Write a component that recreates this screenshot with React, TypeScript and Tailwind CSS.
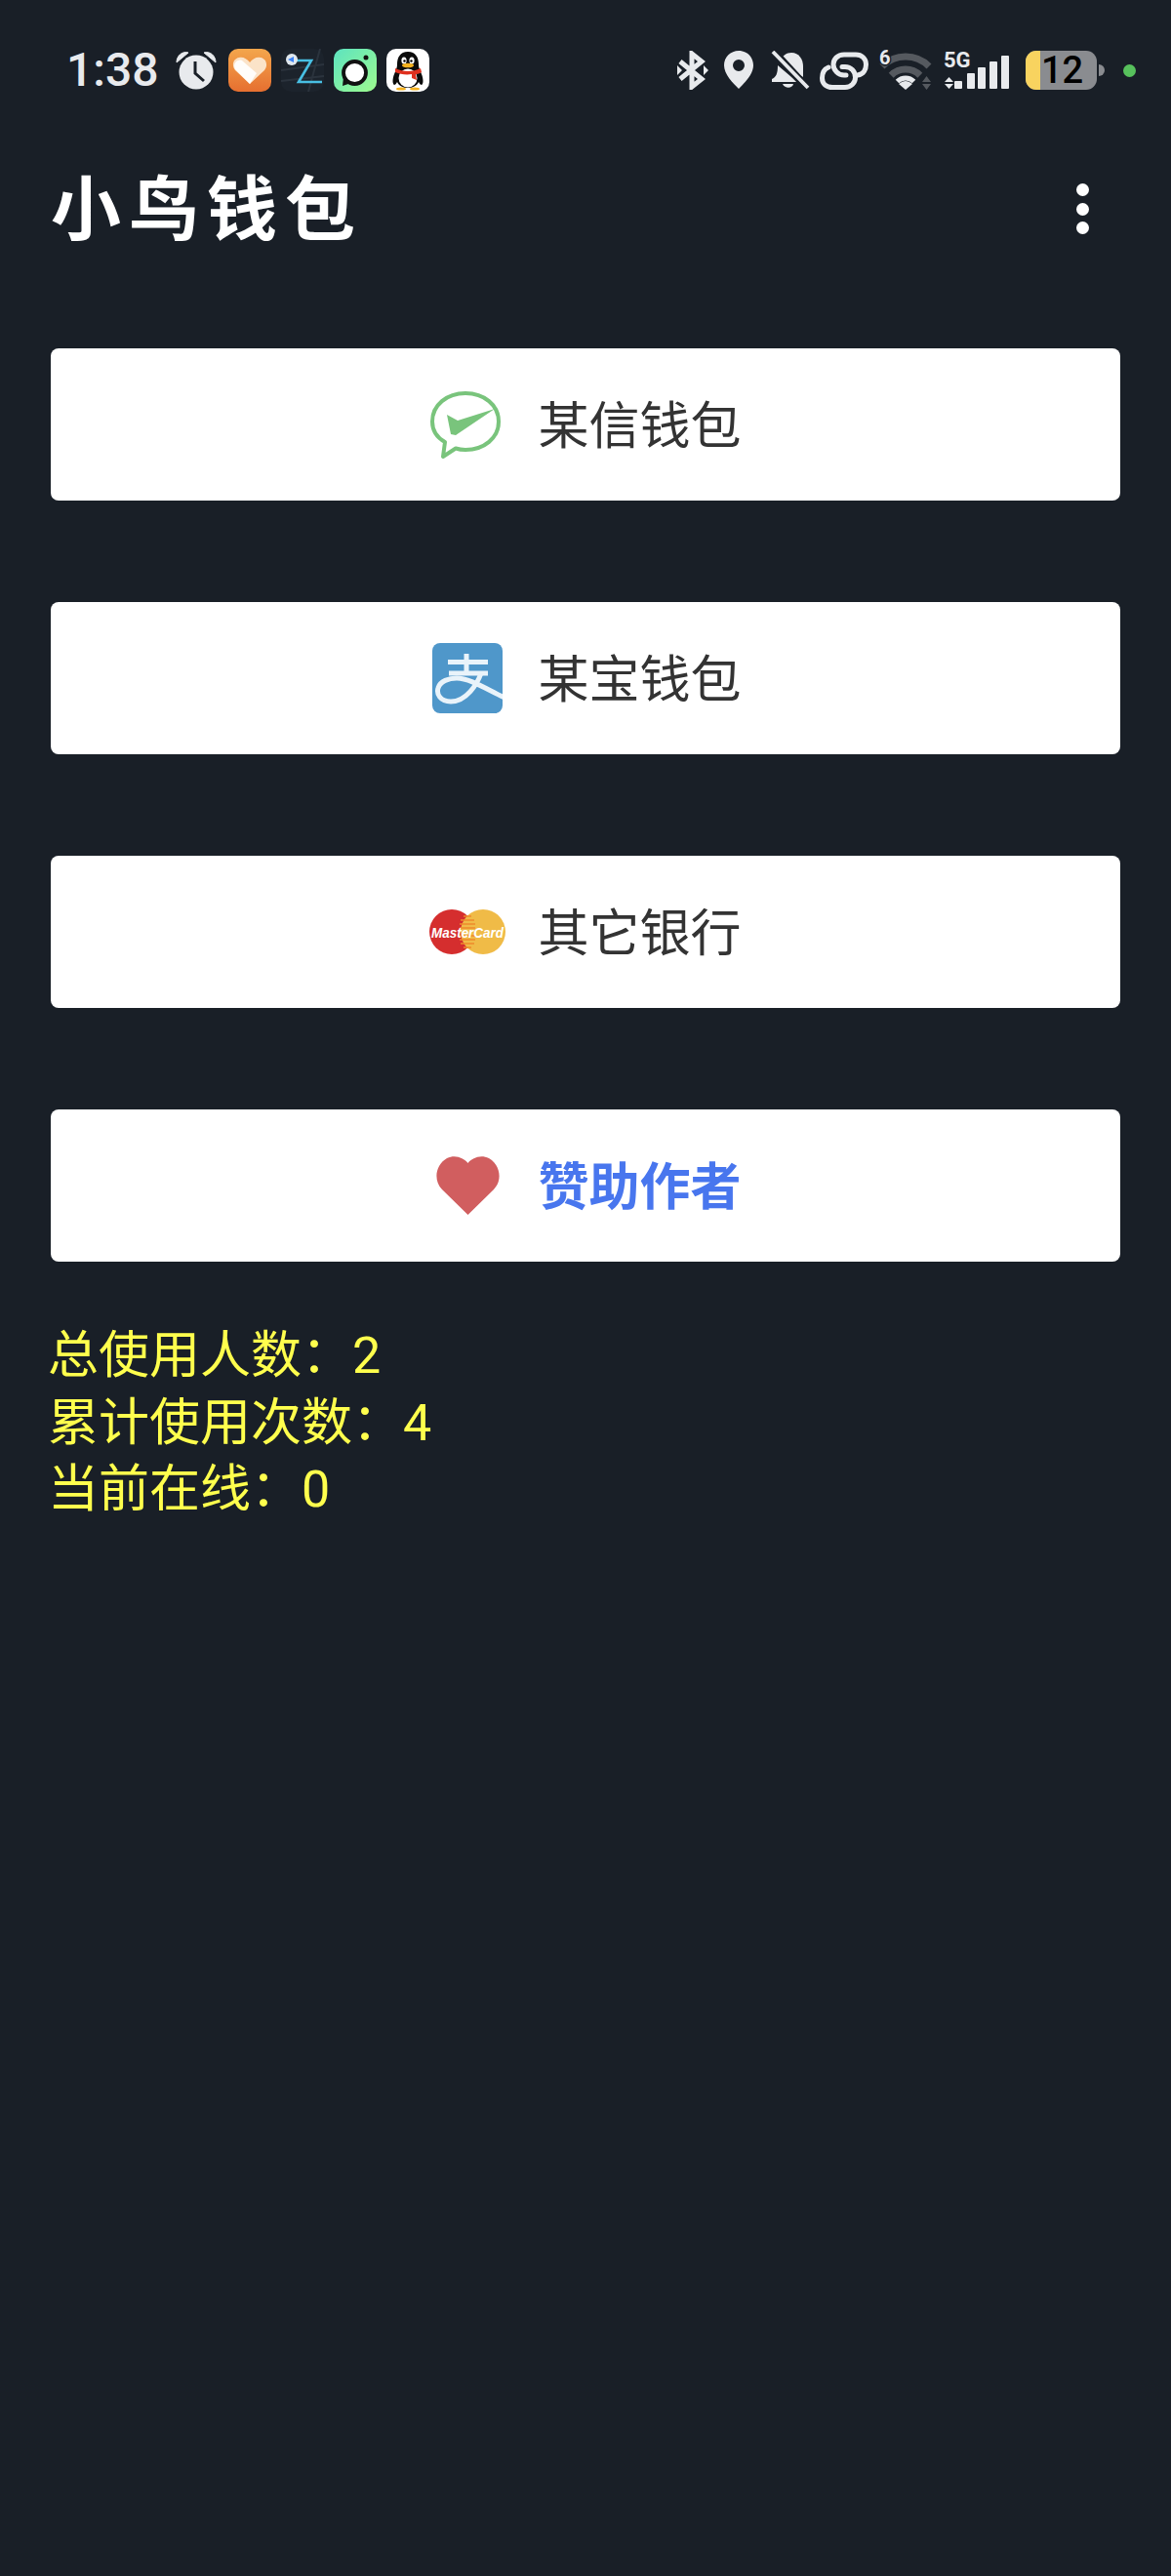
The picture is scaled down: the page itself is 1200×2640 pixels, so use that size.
import React from 'react';

const cjk = { fontFamily: '"Noto Sans CJK SC", sans-serif' };

const AlarmIcon = () => (
  <svg width="42" height="40" viewBox="0 0 42 40">
    <path d="M1 12 C1 5 7 0 13 2 Z M41 12 C41 5 35 0 29 2 Z" fill="#e8eaed" stroke="#e8eaed" strokeWidth="1" />
    <circle cx="21" cy="22" r="17.5" fill="#e8eaed" />
    <path d="M20 11 V23 L29 31" fill="none" stroke="#191f27" strokeWidth="3" />
  </svg>
);

const HealthIcon = () => (
  <svg width="44" height="44" viewBox="0 0 44 44">
    <defs>
      <linearGradient id="healthBg" x1="0" y1="0" x2="0" y2="1">
        <stop offset="0" stopColor="#f3a64c" />
        <stop offset="1" stopColor="#e66f30" />
      </linearGradient>
    </defs>
    <rect width="44" height="44" rx="10" fill="url(#healthBg)" />
    <path d="M22 36 L7 22 C3 17 5 10 11 9 C15 8 19 10 22 14 C25 10 29 8 33 9 C39 10 41 17 37 22 Z" fill="#fbe3c8" />
    <path d="M7 21 C4 16 9 10 14 12 L29 25 L22 36 Z" fill="#fff" opacity="0.9" />
  </svg>
);

const ZIcon = () => (
  <svg width="44" height="44" viewBox="0 0 44 44">
    <rect width="44" height="44" rx="10" fill="#1c232c" />
    <path d="M0 22 L44 16 M0 33 L44 28 M40 0 L28 44" stroke="#2b333d" strokeWidth="2" />
    <path d="M13 12 H31 L18 34 H42" fill="none" stroke="#48bfe3" strokeWidth="2.6" />
    <circle cx="11" cy="11" r="6" fill="#dfe7ee" />
    <path d="M7 11 L13 8 V14 Z" fill="#3b82f6" />
  </svg>
);

const ChatIcon = () => (
  <svg width="44" height="44" viewBox="0 0 44 44">
    <defs>
      <linearGradient id="chatBg" x1="0" y1="0" x2="1" y2="1">
        <stop offset="0" stopColor="#5de3c0" />
        <stop offset="1" stopColor="#9dfb8e" />
      </linearGradient>
    </defs>
    <rect width="44" height="44" rx="10" fill="url(#chatBg)" />
    <circle cx="21.500" cy="24.500" r="11.500" fill="#fff" stroke="#111" strokeWidth="3.800" />
    <path d="M10 29 L9 38 L18 35 Z" fill="#111" />
    <circle cx="33" cy="9" r="2.500" fill="#111" />
  </svg>
);

const QQIcon = () => (
  <svg width="44" height="44" viewBox="0 0 44 44">
    <rect width="44" height="44" rx="10" fill="#fff" />
    <path d="M22 3 C14 3 11 9 11 16 C11 19 10 21 8 26 C6 31 6 36 8 37 C9 37 10 36 11 34 C13 38 17 40 22 40 C27 40 31 38 33 34 C34 36 35 37 36 37 C38 36 38 31 36 26 C34 21 33 19 33 16 C33 9 30 3 22 3 Z" fill="#0b0b0b" />
    <ellipse cx="22" cy="30" rx="9.500" ry="9.500" fill="#fff" />
    <ellipse cx="18" cy="12" rx="2.600" ry="3.600" fill="#fff" />
    <ellipse cx="26" cy="12" rx="2.600" ry="3.600" fill="#fff" />
    <circle cx="18.500" cy="12.500" r="1.200" fill="#000" />
    <circle cx="25.500" cy="12.500" r="1.200" fill="#000" />
    <ellipse cx="22" cy="17" rx="6" ry="2.300" fill="#f5b21f" />
    <path d="M9 20 C17 24 27 24 35 20 L36 24 C33 26 31 26 30 26 L31 32 L26 30 L26 26 C20 27 14 26 9 24 Z" fill="#e0301e" />
    <ellipse cx="15" cy="41" rx="5" ry="1.600" fill="#f5b21f" />
    <ellipse cx="29" cy="41" rx="5" ry="1.600" fill="#f5b21f" />
  </svg>
);

const BluetoothIcon = () => (
  <svg width="32" height="40" viewBox="0 0 32 40">
    <path d="M3 11 L25 29 L15 37 V3 L25 11 L3 29" fill="none" stroke="#e8eaed" strokeWidth="5" strokeLinejoin="miter" />
    <path d="M27 15 L32 20 L27 25 Z M0 15 L5 20 L0 25 Z" fill="#e8eaed" />
  </svg>
);

const PinIcon = () => (
  <svg width="30" height="40" viewBox="0 0 30 40">
    <path fillRule="evenodd" d="M15 0 C6.700 0 0 6.400 0 15 C0 24 9 33 15 39 C21 33 30 24 30 15 C30 6.400 23.300 0 15 0 Z M15 9 A6 6 0 1 1 15 21 A6 6 0 1 1 15 9 Z" fill="#e8eaed" />
  </svg>
);

const BellOffIcon = () => (
  <svg width="40" height="40" viewBox="0 0 40 40">
    <path d="M9 12 C11 5 16 2 21 2 C29 2 33 9 33 16 V27 Z" fill="#e8eaed" />
    <path d="M7 15 L27 32 H1 V29 C5 27 7 24 7 15 Z" fill="#e8eaed" />
    <path d="M12 34 H23 C22 39 14 39 12 34 Z" fill="#e8eaed" />
    <path d="M3 1 L37 38" stroke="#191f27" strokeWidth="8" />
    <path d="M2 1 L38 38" stroke="#e8eaed" strokeWidth="3.800" />
  </svg>
);

const LinkIcon = () => (
  <svg width="52" height="42" viewBox="0 0 52 42">
    <g fill="none" stroke="#e8eaed" strokeWidth="5" strokeLinecap="round">
      <path d="M39 26 C45 25 47.500 20 47.500 15 C47.500 9 43 5 37 5 H25 C18 5 14 10 14 15 C14 21 19 26 25 26 H27" />
      <path d="M9 18 C4 20 2.500 25 2.500 29 C2.500 35 7 38.500 13 38.500 H26 C32 38.500 36.500 34 36.500 28.500 C36.500 22 32 17.500 26 17.500 H23" />
    </g>
  </svg>
);

const WifiIcon = () => (
  <svg width="56" height="42" viewBox="0 0 56 42" className="overflow-visible">
    <path d="M3 17 A34 34 0 0 1 51 17" fill="none" stroke="#55595f" strokeWidth="7" />
    <path d="M12.200 26.200 A21 21 0 0 1 41.800 26.200" fill="none" stroke="#55595f" strokeWidth="7" />
    <path d="M18.500 32.500 A12 12 0 0 1 35.500 32.500" fill="none" stroke="#e8eaed" strokeWidth="5" />
    <path d="M27 41 L20 35 Q27 29 34 35 Z" fill="#e8eaed" />
    <path d="M44 33 L48.500 27 L53 33 Z M44 35 L53 35 L48.500 41 Z" fill="#55595f" />
    <text x="0" y="15" fontFamily="Roboto, sans-serif" fontWeight="700" fontSize="20" fill="#e8eaed" stroke="#191f27" strokeWidth="3" paintOrder="stroke">6</text>
  </svg>
);

const SignalIcon = () => (
  <svg width="68" height="42" viewBox="0 0 68 42" className="overflow-visible">
    <text x="0" y="18" fontFamily="Roboto, sans-serif" fontWeight="700" fontSize="22" fill="#e8eaed">5G</text>
    <path d="M1 33 L5.500 28 L10 33 Z M1 35 L10 35 L5.500 40 Z" fill="#e8eaed" />
    <rect x="11" y="32" width="8" height="8" rx="1" fill="#e8eaed" />
    <rect x="24" y="24" width="8" height="16" rx="1" fill="#e8eaed" />
    <rect x="35" y="18" width="8" height="22" rx="1" fill="#e8eaed" />
    <rect x="47" y="12" width="8" height="28" rx="1" fill="#e8eaed" />
    <rect x="59" y="6" width="8" height="34" rx="1" fill="#e8eaed" />
  </svg>
);

const Battery = () => (
  <div className="flex items-center">
    <div className="relative flex items-center justify-center w-[73px] h-[40px] rounded-[11px] bg-[#8a8c90] pl-[2px]">
      <div className="absolute left-0 top-0 bottom-0 w-[15px] rounded-l-[11px] bg-[#f8d35f]" />
      <span className="relative text-[38px] font-medium text-black leading-none font-['Roboto']">12</span>
    </div>
    <div className="ml-[2px] w-[6px] h-[12px] rounded-r-full bg-[#8a8c90]" />
  </div>
);

const StatusBar = () => (
  <div className="flex items-center justify-between h-[44px] mt-[50px] pl-[68px] pr-[36px]">
    <div className="flex items-center">
      <span className="text-[48px] font-medium text-[#e8eaed] leading-none font-['Roboto'] mr-[17px]">1:38</span>
      <AlarmIcon />
      <div className="flex items-center gap-[10px] ml-[12px]">
        <HealthIcon />
        <ZIcon />
        <ChatIcon />
        <QQIcon />
      </div>
    </div>
    <div className="flex items-center">
      <BluetoothIcon />
      <div className="ml-[16px]"><PinIcon /></div>
      <div className="ml-[18px]"><BellOffIcon /></div>
      <div className="ml-[10px]"><LinkIcon /></div>
      <div className="ml-[9px]"><WifiIcon /></div>
      <div className="ml-[10px]"><SignalIcon /></div>
      <div className="ml-[16px]"><Battery /></div>
      <div className="ml-[19px] w-[13px] h-[13px] rounded-full bg-[#57c15c]" />
    </div>
  </div>
);

const WechatLogo = () => (
  <svg width="80" height="80" viewBox="0 0 80 80">
    <path d="M17 58 C8 53 4 46 4 37 C4 20 19 8 38 8 C57 8 72 20 72 37 C72 54 57 66 38 66 C34 66 31 65.500 28 64.500 L15 73 Z" fill="none" stroke="#79c47c" strokeWidth="4" strokeLinejoin="round" />
    <path d="M19 30 L30 36 L68 24 L28 51 L23 50 Z" fill="#79c47c" />
  </svg>
);

const AlipayLogo = () => (
  <svg width="80" height="80" viewBox="0 0 80 80">
    <defs>
      <clipPath id="alipayBox">
        <rect width="72" height="72" rx="8" />
      </clipPath>
    </defs>
    <g transform="translate(4 4)" clipPath="url(#alipayBox)">
      <rect width="72" height="72" fill="#4f97ca" />
      <g fill="none" stroke="#e9f3fa" strokeWidth="5">
        <path d="M35 11 V30" />
        <path d="M16 19.500 H57" />
        <path d="M17 31 H57" />
        <path d="M50 31 C46 42 35 60 19 60 C8 60 4 52 6 46 C8 39 17 36 25 36 C38 36 55 47 74 56" />
      </g>
    </g>
  </svg>
);

const MasterCardLogo = () => (
  <svg width="80" height="80" viewBox="0 0 80 80" className="overflow-visible">
    <circle cx="24" cy="40" r="23" fill="#d52e2e" />
    <circle cx="56" cy="40" r="23" fill="#f0bb47" />
    <g stroke="#ee8a2c" strokeWidth="1.500">
      <path d="M36 24 H44 M33 28 H47 M32 32 H48 M32 36 H48 M32 44 H48 M32 48 H48 M33 52 H47 M36 56 H44" />
    </g>
    <text x="3" y="46" textLength="74" lengthAdjust="spacingAndGlyphs" fontFamily='"Liberation Sans", sans-serif' fontStyle="italic" fontWeight="700" fontSize="15" fill="#fff">MasterCard</text>
  </svg>
);

const HeartLogo = () => (
  <svg width="80" height="80" viewBox="0 0 80 80">
    <path d="M40.500 70 L14 44 C5 35 7 19 19 12 C28 8 36 12 40.500 17 C45 12 53 8 62 12 C74 19 76 35 67 44 Z" fill="#d15e5f" />
  </svg>
);

const WalletButton = ({ logo, label, bold }: { logo: React.ReactNode; label: string; bold?: boolean }) => (
  <button className="flex items-center justify-center w-full h-[156px] rounded-[8px] bg-white pr-[1px]">
    <span className="shrink-0">{logo}</span>
    <span className={`ml-[32px] pb-[5px] text-[52px] leading-none ${bold ? 'font-bold text-[#4876ee]' : 'text-[#333333]'}`} style={cjk}>
      {label}
    </span>
  </button>
);

const App: React.FC = () => {
  return (
    <div className="w-[1200px] h-[2640px] overflow-hidden bg-[#191f27]">
      <StatusBar />

      <header className="flex items-center justify-between h-[112px] mt-[64px] pl-[52px] pr-[84px]">
        <h1 className="pb-[10px] text-[72px] font-bold tracking-[8px] text-white leading-none" style={cjk}>小鸟钱包</h1>
        <div className="flex flex-col gap-[6.500px]">
          <span className="w-[13px] h-[13px] rounded-full bg-white" />
          <span className="w-[13px] h-[13px] rounded-full bg-white" />
          <span className="w-[13px] h-[13px] rounded-full bg-white" />
        </div>
      </header>

      <main className="mt-[87px] px-[52px]">
        <div className="flex flex-col gap-[104px]">
          <WalletButton logo={<WechatLogo />} label="某信钱包" />
          <WalletButton logo={<AlipayLogo />} label="某宝钱包" />
          <WalletButton logo={<MasterCardLogo />} label="其它银行" />
          <WalletButton logo={<HeartLogo />} label="赞助作者" bold />
        </div>
        <div className="mt-[63px] -ml-[3px] text-[52px] leading-[68.500px] text-[#ffff4d]" style={{ fontFamily: 'Roboto, "Noto Sans CJK SC", sans-serif' }}>
          <p>总使用人数：2</p>
          <p>累计使用次数：4</p>
          <p>当前在线：0</p>
        </div>
      </main>
    </div>
  );
};

export default App;
